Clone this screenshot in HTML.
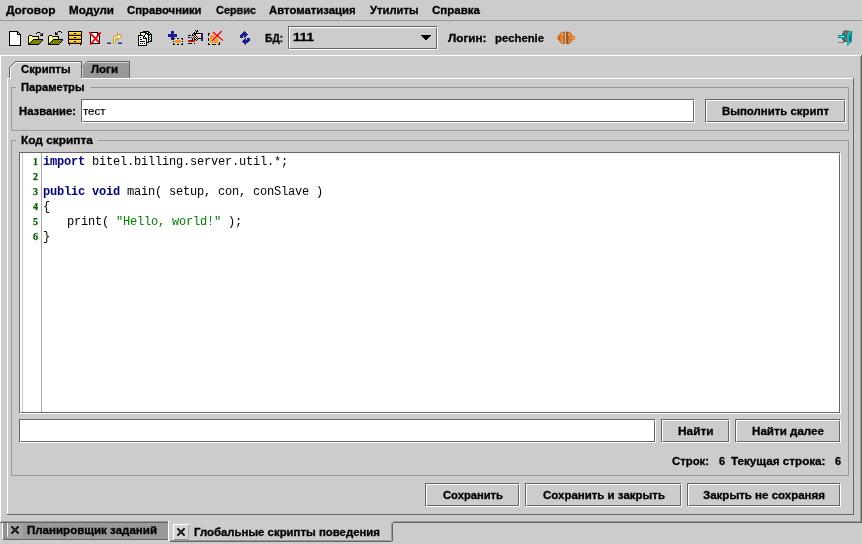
<!DOCTYPE html>
<html><head><meta charset="utf-8"><title>BGBilling</title><style>
html,body{margin:0;padding:0}
body{width:862px;height:544px;background:#cccccc;position:relative;overflow:hidden;font-family:"Liberation Sans",sans-serif}
.r{position:absolute}
.t{position:absolute;white-space:pre;line-height:20px;height:20px;transform-origin:0 0;color:#000;will-change:transform}
.b{font:bold 11px "Liberation Sans",sans-serif;line-height:20px;-webkit-text-stroke:0.3px #000}
.n{font:11px "Liberation Sans",sans-serif;line-height:20px;-webkit-text-stroke:0.2px #000}
.m{font:12px "Liberation Mono",monospace;line-height:20px}
.mb{font:bold 12px "Liberation Mono",monospace;line-height:20px}
.ln{font:bold 10px "Liberation Serif",serif;line-height:20px;-webkit-text-stroke:0.25px #006000}
svg{position:absolute;overflow:visible}
</style></head><body>
<div class="r" style="left:0px;top:20px;width:862px;height:1px;background:#999999"></div>
<div class="t b" style="left:5.5px;top:0px;transform:scaleX(1.0783);">Договор</div>
<div class="t b" style="left:69px;top:0px;transform:scaleX(1.0569);">Модули</div>
<div class="t b" style="left:127px;top:0px;transform:scaleX(1.0267);">Справочники</div>
<div class="t b" style="left:215.5px;top:0px;transform:scaleX(0.9892);">Сервис</div>
<div class="t b" style="left:269px;top:0px;transform:scaleX(1.0294);">Автоматизация</div>
<div class="t b" style="left:370px;top:0px;transform:scaleX(1.0204);">Утилиты</div>
<div class="t b" style="left:432px;top:0px;transform:scaleX(1.0477);">Справка</div>
<div class="t b" style="left:265px;top:28px;transform:scaleX(0.9275);">БД:</div>
<div class="r" style="left:289px;top:49px;width:149px;height:1px;background:#ffffff"></div>
<div class="r" style="left:437px;top:27px;width:1px;height:23px;background:#ffffff"></div>
<div class="r" style="left:289px;top:27px;width:147px;height:1px;background:#ffffff"></div>
<div class="r" style="left:289px;top:27px;width:1px;height:21px;background:#ffffff"></div>
<div class="r" style="left:288px;top:26px;width:149px;height:1px;background:#666666"></div>
<div class="r" style="left:288px;top:48px;width:149px;height:1px;background:#666666"></div>
<div class="r" style="left:288px;top:26px;width:1px;height:23px;background:#666666"></div>
<div class="r" style="left:436px;top:26px;width:1px;height:23px;background:#666666"></div>
<div class="r" style="left:436px;top:27px;width:1px;height:1px;background:#cccccc"></div>
<div class="r" style="left:289px;top:48px;width:1px;height:1px;background:#cccccc"></div>
<div class="r" style="left:437px;top:26px;width:1px;height:1px;background:#cccccc"></div>
<div class="r" style="left:288px;top:49px;width:1px;height:1px;background:#cccccc"></div>
<div class="t b" style="left:293px;top:27px;transform:scaleX(1.2252);">111</div>
<svg style="left:421px;top:35px" width="10" height="5" shape-rendering="crispEdges"><path d="M0 0h10v1h-1v1h-1v1h-1v1h-1v1h-2v-1h-1v-1h-1v-1h-1v-1h-1z" fill="#000"/></svg>
<div class="t b" style="left:448px;top:28px;transform:scaleX(1.0667);">Логин:</div>
<div class="t b" style="left:495px;top:28px;transform:scaleX(1.0275);">pechenie</div>
<svg style="left:9px;top:31px" width="12" height="15" shape-rendering="crispEdges"><rect x="0" y="0" width="9" height="1" fill="#000000"/><rect x="0" y="1" width="1" height="1" fill="#000000"/><rect x="1" y="1" width="7" height="1" fill="#ffffff"/><rect x="8" y="1" width="2" height="1" fill="#000000"/><rect x="0" y="2" width="1" height="1" fill="#000000"/><rect x="1" y="2" width="7" height="1" fill="#ffffff"/><rect x="8" y="2" width="1" height="1" fill="#000000"/><rect x="9" y="2" width="1" height="1" fill="#ffffff"/><rect x="10" y="2" width="1" height="1" fill="#000000"/><rect x="0" y="3" width="1" height="1" fill="#000000"/><rect x="1" y="3" width="7" height="1" fill="#ffffff"/><rect x="8" y="3" width="4" height="1" fill="#000000"/><rect x="0" y="4" width="1" height="1" fill="#000000"/><rect x="1" y="4" width="10" height="1" fill="#ffffff"/><rect x="11" y="4" width="1" height="1" fill="#000000"/><rect x="0" y="5" width="1" height="1" fill="#000000"/><rect x="1" y="5" width="10" height="1" fill="#ffffff"/><rect x="11" y="5" width="1" height="1" fill="#000000"/><rect x="0" y="6" width="1" height="1" fill="#000000"/><rect x="1" y="6" width="10" height="1" fill="#ffffff"/><rect x="11" y="6" width="1" height="1" fill="#000000"/><rect x="0" y="7" width="1" height="1" fill="#000000"/><rect x="1" y="7" width="10" height="1" fill="#ffffff"/><rect x="11" y="7" width="1" height="1" fill="#000000"/><rect x="0" y="8" width="1" height="1" fill="#000000"/><rect x="1" y="8" width="10" height="1" fill="#ffffff"/><rect x="11" y="8" width="1" height="1" fill="#000000"/><rect x="0" y="9" width="1" height="1" fill="#000000"/><rect x="1" y="9" width="10" height="1" fill="#ffffff"/><rect x="11" y="9" width="1" height="1" fill="#000000"/><rect x="0" y="10" width="1" height="1" fill="#000000"/><rect x="1" y="10" width="10" height="1" fill="#ffffff"/><rect x="11" y="10" width="1" height="1" fill="#000000"/><rect x="0" y="11" width="1" height="1" fill="#000000"/><rect x="1" y="11" width="10" height="1" fill="#ffffff"/><rect x="11" y="11" width="1" height="1" fill="#000000"/><rect x="0" y="12" width="1" height="1" fill="#000000"/><rect x="1" y="12" width="10" height="1" fill="#ffffff"/><rect x="11" y="12" width="1" height="1" fill="#000000"/><rect x="0" y="13" width="1" height="1" fill="#000000"/><rect x="1" y="13" width="10" height="1" fill="#ffffff"/><rect x="11" y="13" width="1" height="1" fill="#000000"/><rect x="0" y="14" width="12" height="1" fill="#000000"/></svg>
<svg style="left:28px;top:31px" width="15" height="14" shape-rendering="crispEdges"><rect x="9" y="1" width="3" height="1" fill="#000000"/><rect x="8" y="2" width="1" height="1" fill="#000000"/><rect x="12" y="2" width="1" height="1" fill="#000000"/><rect x="14" y="2" width="1" height="1" fill="#000000"/><rect x="13" y="3" width="2" height="1" fill="#000000"/><rect x="1" y="4" width="3" height="1" fill="#000000"/><rect x="0" y="5" width="1" height="1" fill="#000000"/><rect x="1" y="5" width="1" height="1" fill="#ffff00"/><rect x="2" y="5" width="1" height="1" fill="#ffffff"/><rect x="3" y="5" width="1" height="1" fill="#ffff00"/><rect x="4" y="5" width="7" height="1" fill="#000000"/><rect x="0" y="6" width="1" height="1" fill="#000000"/><rect x="1" y="6" width="1" height="1" fill="#ffffff"/><rect x="2" y="6" width="1" height="1" fill="#ffff00"/><rect x="3" y="6" width="1" height="1" fill="#ffffff"/><rect x="4" y="6" width="1" height="1" fill="#ffff00"/><rect x="5" y="6" width="1" height="1" fill="#ffffff"/><rect x="6" y="6" width="1" height="1" fill="#ffff00"/><rect x="7" y="6" width="1" height="1" fill="#ffffff"/><rect x="8" y="6" width="1" height="1" fill="#ffff00"/><rect x="9" y="6" width="1" height="1" fill="#ffffff"/><rect x="10" y="6" width="1" height="1" fill="#000000"/><rect x="0" y="7" width="1" height="1" fill="#000000"/><rect x="1" y="7" width="1" height="1" fill="#ffff00"/><rect x="2" y="7" width="1" height="1" fill="#ffffff"/><rect x="3" y="7" width="1" height="1" fill="#ffff00"/><rect x="4" y="7" width="1" height="1" fill="#ffffff"/><rect x="5" y="7" width="1" height="1" fill="#ffff00"/><rect x="6" y="7" width="1" height="1" fill="#ffffff"/><rect x="7" y="7" width="1" height="1" fill="#ffff00"/><rect x="8" y="7" width="1" height="1" fill="#ffffff"/><rect x="9" y="7" width="1" height="1" fill="#ffff00"/><rect x="10" y="7" width="1" height="1" fill="#000000"/><rect x="0" y="8" width="1" height="1" fill="#000000"/><rect x="1" y="8" width="1" height="1" fill="#ffffff"/><rect x="2" y="8" width="1" height="1" fill="#ffff00"/><rect x="3" y="8" width="1" height="1" fill="#ffffff"/><rect x="4" y="8" width="1" height="1" fill="#ffff00"/><rect x="5" y="8" width="10" height="1" fill="#000000"/><rect x="0" y="9" width="1" height="1" fill="#000000"/><rect x="1" y="9" width="1" height="1" fill="#ffff00"/><rect x="2" y="9" width="1" height="1" fill="#ffffff"/><rect x="3" y="9" width="1" height="1" fill="#ffff00"/><rect x="4" y="9" width="1" height="1" fill="#000000"/><rect x="5" y="9" width="9" height="1" fill="#808000"/><rect x="14" y="9" width="1" height="1" fill="#000000"/><rect x="0" y="10" width="1" height="1" fill="#000000"/><rect x="1" y="10" width="1" height="1" fill="#ffffff"/><rect x="2" y="10" width="1" height="1" fill="#ffff00"/><rect x="3" y="10" width="1" height="1" fill="#000000"/><rect x="4" y="10" width="9" height="1" fill="#808000"/><rect x="13" y="10" width="1" height="1" fill="#000000"/><rect x="0" y="11" width="1" height="1" fill="#000000"/><rect x="1" y="11" width="1" height="1" fill="#ffff00"/><rect x="2" y="11" width="1" height="1" fill="#000000"/><rect x="3" y="11" width="9" height="1" fill="#808000"/><rect x="12" y="11" width="1" height="1" fill="#000000"/><rect x="0" y="12" width="2" height="1" fill="#000000"/><rect x="2" y="12" width="9" height="1" fill="#808000"/><rect x="11" y="12" width="1" height="1" fill="#000000"/><rect x="0" y="13" width="11" height="1" fill="#000000"/><rect x="12" y="4" width="3" height="1" fill="#000"/></svg>
<svg style="left:48px;top:31px" width="15" height="14" shape-rendering="crispEdges"><rect x="10" y="0" width="3" height="1" fill="#000000"/><rect x="7" y="1" width="1" height="1" fill="#000000"/><rect x="9" y="1" width="1" height="1" fill="#000000"/><rect x="13" y="1" width="1" height="1" fill="#000000"/><rect x="7" y="2" width="2" height="1" fill="#000000"/><rect x="7" y="3" width="3" height="1" fill="#000000"/><rect x="1" y="4" width="3" height="1" fill="#000000"/><rect x="0" y="5" width="1" height="1" fill="#000000"/><rect x="1" y="5" width="1" height="1" fill="#ffff00"/><rect x="2" y="5" width="1" height="1" fill="#ffffff"/><rect x="3" y="5" width="1" height="1" fill="#ffff00"/><rect x="4" y="5" width="7" height="1" fill="#000000"/><rect x="0" y="6" width="1" height="1" fill="#000000"/><rect x="1" y="6" width="1" height="1" fill="#ffffff"/><rect x="2" y="6" width="1" height="1" fill="#ffff00"/><rect x="3" y="6" width="1" height="1" fill="#ffffff"/><rect x="4" y="6" width="1" height="1" fill="#ffff00"/><rect x="5" y="6" width="1" height="1" fill="#ffffff"/><rect x="6" y="6" width="1" height="1" fill="#ffff00"/><rect x="7" y="6" width="1" height="1" fill="#ffffff"/><rect x="8" y="6" width="1" height="1" fill="#ffff00"/><rect x="9" y="6" width="1" height="1" fill="#ffffff"/><rect x="10" y="6" width="1" height="1" fill="#000000"/><rect x="0" y="7" width="1" height="1" fill="#000000"/><rect x="1" y="7" width="1" height="1" fill="#ffff00"/><rect x="2" y="7" width="1" height="1" fill="#ffffff"/><rect x="3" y="7" width="1" height="1" fill="#ffff00"/><rect x="4" y="7" width="1" height="1" fill="#ffffff"/><rect x="5" y="7" width="1" height="1" fill="#ffff00"/><rect x="6" y="7" width="1" height="1" fill="#ffffff"/><rect x="7" y="7" width="1" height="1" fill="#ffff00"/><rect x="8" y="7" width="1" height="1" fill="#ffffff"/><rect x="9" y="7" width="1" height="1" fill="#ffff00"/><rect x="10" y="7" width="1" height="1" fill="#000000"/><rect x="0" y="8" width="1" height="1" fill="#000000"/><rect x="1" y="8" width="1" height="1" fill="#ffffff"/><rect x="2" y="8" width="1" height="1" fill="#ffff00"/><rect x="3" y="8" width="1" height="1" fill="#ffffff"/><rect x="4" y="8" width="1" height="1" fill="#ffff00"/><rect x="5" y="8" width="10" height="1" fill="#000000"/><rect x="0" y="9" width="1" height="1" fill="#000000"/><rect x="1" y="9" width="1" height="1" fill="#ffff00"/><rect x="2" y="9" width="1" height="1" fill="#ffffff"/><rect x="3" y="9" width="1" height="1" fill="#ffff00"/><rect x="4" y="9" width="1" height="1" fill="#000000"/><rect x="5" y="9" width="9" height="1" fill="#808000"/><rect x="14" y="9" width="1" height="1" fill="#000000"/><rect x="0" y="10" width="1" height="1" fill="#000000"/><rect x="1" y="10" width="1" height="1" fill="#ffffff"/><rect x="2" y="10" width="1" height="1" fill="#ffff00"/><rect x="3" y="10" width="1" height="1" fill="#000000"/><rect x="4" y="10" width="9" height="1" fill="#808000"/><rect x="13" y="10" width="1" height="1" fill="#000000"/><rect x="0" y="11" width="1" height="1" fill="#000000"/><rect x="1" y="11" width="1" height="1" fill="#ffff00"/><rect x="2" y="11" width="1" height="1" fill="#000000"/><rect x="3" y="11" width="9" height="1" fill="#808000"/><rect x="12" y="11" width="1" height="1" fill="#000000"/><rect x="0" y="12" width="2" height="1" fill="#000000"/><rect x="2" y="12" width="9" height="1" fill="#808000"/><rect x="11" y="12" width="1" height="1" fill="#000000"/><rect x="0" y="13" width="11" height="1" fill="#000000"/></svg>
<svg style="left:68px;top:31px" width="14" height="15" shape-rendering="crispEdges"><rect x="0" y="0" width="14" height="1" fill="#000000"/><rect x="0" y="1" width="1" height="1" fill="#000000"/><rect x="1" y="1" width="12" height="1" fill="#ffe066"/><rect x="13" y="1" width="1" height="1" fill="#000000"/><rect x="0" y="2" width="1" height="1" fill="#000000"/><rect x="1" y="2" width="5" height="1" fill="#ffc20e"/><rect x="6" y="2" width="2" height="1" fill="#000000"/><rect x="8" y="2" width="5" height="1" fill="#ffc20e"/><rect x="13" y="2" width="1" height="1" fill="#000000"/><rect x="0" y="3" width="1" height="1" fill="#000000"/><rect x="1" y="3" width="12" height="1" fill="#e0a000"/><rect x="13" y="3" width="1" height="1" fill="#000000"/><rect x="0" y="4" width="14" height="1" fill="#000000"/><rect x="0" y="5" width="1" height="1" fill="#000000"/><rect x="1" y="5" width="12" height="1" fill="#ffe066"/><rect x="13" y="5" width="1" height="1" fill="#000000"/><rect x="0" y="6" width="1" height="1" fill="#000000"/><rect x="1" y="6" width="5" height="1" fill="#ffc20e"/><rect x="6" y="6" width="2" height="1" fill="#000000"/><rect x="8" y="6" width="5" height="1" fill="#ffc20e"/><rect x="13" y="6" width="1" height="1" fill="#000000"/><rect x="0" y="7" width="1" height="1" fill="#000000"/><rect x="1" y="7" width="12" height="1" fill="#e0a000"/><rect x="13" y="7" width="1" height="1" fill="#000000"/><rect x="0" y="8" width="14" height="1" fill="#000000"/><rect x="0" y="9" width="1" height="1" fill="#000000"/><rect x="1" y="9" width="12" height="1" fill="#ffe066"/><rect x="13" y="9" width="1" height="1" fill="#000000"/><rect x="0" y="10" width="1" height="1" fill="#000000"/><rect x="1" y="10" width="5" height="1" fill="#ffc20e"/><rect x="6" y="10" width="2" height="1" fill="#000000"/><rect x="8" y="10" width="5" height="1" fill="#ffc20e"/><rect x="13" y="10" width="1" height="1" fill="#000000"/><rect x="0" y="11" width="1" height="1" fill="#000000"/><rect x="1" y="11" width="12" height="1" fill="#e0a000"/><rect x="13" y="11" width="1" height="1" fill="#000000"/><rect x="0" y="12" width="14" height="1" fill="#000000"/><rect x="1" y="13" width="1" height="1" fill="#000000"/><rect x="12" y="13" width="1" height="1" fill="#000000"/><rect x="1" y="14" width="1" height="1" fill="#808080"/><rect x="12" y="14" width="1" height="1" fill="#808080"/></svg>
<svg style="left:88px;top:31px" width="14" height="15" shape-rendering="crispEdges"><rect x="2" y="1" width="8" height="1" fill="#000000"/><rect x="2" y="2" width="1" height="1" fill="#000000"/><rect x="3" y="2" width="6" height="1" fill="#ffffff"/><rect x="9" y="2" width="2" height="1" fill="#000000"/><rect x="2" y="3" width="1" height="1" fill="#000000"/><rect x="3" y="3" width="6" height="1" fill="#ffffff"/><rect x="9" y="3" width="3" height="1" fill="#000000"/><rect x="2" y="4" width="1" height="1" fill="#000000"/><rect x="3" y="4" width="8" height="1" fill="#ffffff"/><rect x="11" y="4" width="1" height="1" fill="#000000"/><rect x="2" y="5" width="1" height="1" fill="#000000"/><rect x="3" y="5" width="8" height="1" fill="#ffffff"/><rect x="11" y="5" width="1" height="1" fill="#000000"/><rect x="2" y="6" width="1" height="1" fill="#000000"/><rect x="3" y="6" width="8" height="1" fill="#ffffff"/><rect x="11" y="6" width="1" height="1" fill="#000000"/><rect x="2" y="7" width="1" height="1" fill="#000000"/><rect x="3" y="7" width="8" height="1" fill="#ffffff"/><rect x="11" y="7" width="1" height="1" fill="#000000"/><rect x="2" y="8" width="1" height="1" fill="#000000"/><rect x="3" y="8" width="8" height="1" fill="#ffffff"/><rect x="11" y="8" width="1" height="1" fill="#000000"/><rect x="2" y="9" width="1" height="1" fill="#000000"/><rect x="3" y="9" width="8" height="1" fill="#ffffff"/><rect x="11" y="9" width="1" height="1" fill="#000000"/><rect x="2" y="10" width="1" height="1" fill="#000000"/><rect x="3" y="10" width="8" height="1" fill="#ffffff"/><rect x="11" y="10" width="1" height="1" fill="#000000"/><rect x="2" y="11" width="1" height="1" fill="#000000"/><rect x="3" y="11" width="8" height="1" fill="#ffffff"/><rect x="11" y="11" width="1" height="1" fill="#000000"/><rect x="2" y="12" width="10" height="1" fill="#000000"/><g shape-rendering="auto" stroke="#ff0000" stroke-width="1.8" stroke-linecap="butt"><path d="M1.2 1.2 L11.2 11.5"/><path d="M12.7 1.3 L2.3 13.7"/></g></svg>
<svg style="left:105px;top:31px" width="20" height="16"><g shape-rendering="crispEdges"><rect x="2" y="11" width="4" height="1" fill="#5b86cc"/><rect x="2" y="12" width="4" height="1" fill="#243c78"/><rect x="13" y="11" width="4" height="1" fill="#5b86cc"/><rect x="13" y="12" width="4" height="1" fill="#243c78"/></g><path d="M8.5 12 V7.2 Q8.5 4.6 11 4.6 H12.6 V2.3 L17 5.6 L12.6 8.9 V7 H11.2 Q10.6 7 10.6 7.8 V12 L9.5 13 Z" fill="#fff2cc" stroke="#cc9210" stroke-width="1" stroke-linejoin="round"/></svg>
<svg style="left:137px;top:30px" width="16" height="16" shape-rendering="crispEdges"><rect x="6" y="1" width="6" height="1" fill="#000000"/><rect x="3" y="2" width="6" height="1" fill="#000000"/><rect x="9" y="2" width="1" height="1" fill="#00a000"/><rect x="10" y="2" width="1" height="1" fill="#ffffff"/><rect x="11" y="2" width="2" height="1" fill="#000000"/><rect x="3" y="3" width="1" height="1" fill="#000000"/><rect x="4" y="3" width="1" height="1" fill="#ffff00"/><rect x="5" y="3" width="3" height="1" fill="#ffffff"/><rect x="8" y="3" width="4" height="1" fill="#000000"/><rect x="12" y="3" width="1" height="1" fill="#ffffff"/><rect x="13" y="3" width="1" height="1" fill="#000000"/><rect x="3" y="4" width="1" height="1" fill="#000000"/><rect x="4" y="4" width="2" height="1" fill="#ffffff"/><rect x="6" y="4" width="1" height="1" fill="#ffff00"/><rect x="7" y="4" width="1" height="1" fill="#ffffff"/><rect x="8" y="4" width="1" height="1" fill="#000000"/><rect x="9" y="4" width="1" height="1" fill="#ffffff"/><rect x="10" y="4" width="5" height="1" fill="#000000"/><rect x="1" y="5" width="5" height="1" fill="#000000"/><rect x="6" y="5" width="1" height="1" fill="#ffffff"/><rect x="7" y="5" width="1" height="1" fill="#000000"/><rect x="8" y="5" width="3" height="1" fill="#ffffff"/><rect x="11" y="5" width="1" height="1" fill="#000000"/><rect x="12" y="5" width="1" height="1" fill="#00a000"/><rect x="13" y="5" width="1" height="1" fill="#ffffff"/><rect x="14" y="5" width="1" height="1" fill="#000000"/><rect x="1" y="6" width="1" height="1" fill="#000000"/><rect x="2" y="6" width="4" height="1" fill="#ffffff"/><rect x="6" y="6" width="2" height="1" fill="#000000"/><rect x="8" y="6" width="3" height="1" fill="#ffffff"/><rect x="11" y="6" width="1" height="1" fill="#000000"/><rect x="12" y="6" width="1" height="1" fill="#ffffff"/><rect x="13" y="6" width="1" height="1" fill="#00a000"/><rect x="14" y="6" width="1" height="1" fill="#000000"/><rect x="1" y="7" width="1" height="1" fill="#000000"/><rect x="2" y="7" width="1" height="1" fill="#ffffff"/><rect x="3" y="7" width="1" height="1" fill="#000000"/><rect x="4" y="7" width="2" height="1" fill="#ffffff"/><rect x="6" y="7" width="1" height="1" fill="#000000"/><rect x="7" y="7" width="1" height="1" fill="#ffffff"/><rect x="8" y="7" width="1" height="1" fill="#000000"/><rect x="9" y="7" width="1" height="1" fill="#ffff00"/><rect x="10" y="7" width="1" height="1" fill="#ffffff"/><rect x="11" y="7" width="1" height="1" fill="#000000"/><rect x="12" y="7" width="1" height="1" fill="#00a000"/><rect x="13" y="7" width="1" height="1" fill="#ffffff"/><rect x="14" y="7" width="1" height="1" fill="#000000"/><rect x="1" y="8" width="1" height="1" fill="#000000"/><rect x="2" y="8" width="4" height="1" fill="#ffffff"/><rect x="6" y="8" width="4" height="1" fill="#000000"/><rect x="10" y="8" width="1" height="1" fill="#ffffff"/><rect x="11" y="8" width="1" height="1" fill="#000000"/><rect x="12" y="8" width="1" height="1" fill="#ffffff"/><rect x="13" y="8" width="1" height="1" fill="#00a000"/><rect x="14" y="8" width="1" height="1" fill="#000000"/><rect x="1" y="9" width="1" height="1" fill="#000000"/><rect x="2" y="9" width="1" height="1" fill="#ffffff"/><rect x="3" y="9" width="2" height="1" fill="#000000"/><rect x="5" y="9" width="4" height="1" fill="#ffffff"/><rect x="9" y="9" width="1" height="1" fill="#000000"/><rect x="10" y="9" width="1" height="1" fill="#ffffff"/><rect x="11" y="9" width="1" height="1" fill="#000000"/><rect x="12" y="9" width="1" height="1" fill="#00a000"/><rect x="13" y="9" width="1" height="1" fill="#ffffff"/><rect x="14" y="9" width="1" height="1" fill="#000000"/><rect x="1" y="10" width="1" height="1" fill="#000000"/><rect x="2" y="10" width="7" height="1" fill="#ffffff"/><rect x="9" y="10" width="1" height="1" fill="#000000"/><rect x="10" y="10" width="1" height="1" fill="#ffffff"/><rect x="11" y="10" width="1" height="1" fill="#000000"/><rect x="12" y="10" width="1" height="1" fill="#ffffff"/><rect x="13" y="10" width="1" height="1" fill="#00a000"/><rect x="14" y="10" width="1" height="1" fill="#000000"/><rect x="1" y="11" width="1" height="1" fill="#000000"/><rect x="2" y="11" width="1" height="1" fill="#ffffff"/><rect x="3" y="11" width="5" height="1" fill="#000000"/><rect x="8" y="11" width="1" height="1" fill="#ffffff"/><rect x="9" y="11" width="1" height="1" fill="#000000"/><rect x="10" y="11" width="1" height="1" fill="#ffffff"/><rect x="11" y="11" width="4" height="1" fill="#000000"/><rect x="1" y="12" width="1" height="1" fill="#000000"/><rect x="2" y="12" width="7" height="1" fill="#ffffff"/><rect x="9" y="12" width="3" height="1" fill="#000000"/><rect x="1" y="13" width="1" height="1" fill="#000000"/><rect x="2" y="13" width="1" height="1" fill="#ffffff"/><rect x="3" y="13" width="1" height="1" fill="#000000"/><rect x="4" y="13" width="1" height="1" fill="#ffffff"/><rect x="5" y="13" width="1" height="1" fill="#000000"/><rect x="6" y="13" width="1" height="1" fill="#ffffff"/><rect x="7" y="13" width="1" height="1" fill="#000000"/><rect x="8" y="13" width="1" height="1" fill="#ffffff"/><rect x="9" y="13" width="1" height="1" fill="#000000"/><rect x="1" y="14" width="1" height="1" fill="#000000"/><rect x="2" y="14" width="7" height="1" fill="#ffffff"/><rect x="9" y="14" width="1" height="1" fill="#000000"/><rect x="1" y="15" width="9" height="1" fill="#000000"/></svg>
<svg style="left:168px;top:31px" width="16" height="14" shape-rendering="crispEdges"><rect x="3" y="0" width="3" height="1" fill="#1c1c8c"/><rect x="3" y="1" width="3" height="1" fill="#1c1c8c"/><rect x="3" y="2" width="3" height="1" fill="#1c1c8c"/><rect x="0" y="3" width="9" height="1" fill="#1c1c8c"/><rect x="0" y="4" width="9" height="1" fill="#1c1c8c"/><rect x="0" y="5" width="9" height="1" fill="#1c1c8c"/><rect x="3" y="6" width="3" height="1" fill="#1c1c8c"/><rect x="3" y="7" width="2" height="1" fill="#1c1c8c"/><rect x="5" y="7" width="2" height="1" fill="#000000"/><rect x="9" y="7" width="2" height="1" fill="#000000"/><rect x="13" y="7" width="2" height="1" fill="#000000"/><rect x="3" y="8" width="3" height="1" fill="#1c1c8c"/><rect x="14" y="8" width="1" height="1" fill="#000000"/><rect x="7" y="9" width="6" height="1" fill="#ff9410"/><rect x="5" y="10" width="1" height="1" fill="#000000"/><rect x="7" y="10" width="6" height="1" fill="#ff9410"/><rect x="14" y="10" width="1" height="1" fill="#000000"/><rect x="7" y="11" width="6" height="1" fill="#ff9410"/><rect x="5" y="12" width="1" height="1" fill="#000000"/><rect x="14" y="12" width="1" height="1" fill="#000000"/><rect x="5" y="13" width="2" height="1" fill="#000000"/><rect x="9" y="13" width="2" height="1" fill="#000000"/><rect x="13" y="13" width="2" height="1" fill="#000000"/></svg>
<svg style="left:187px;top:29px" width="16" height="15" shape-rendering="crispEdges"><rect x="8" y="1" width="1" height="1" fill="#000000"/><rect x="10" y="1" width="1" height="1" fill="#000000"/><rect x="9" y="2" width="2" height="1" fill="#000000"/><rect x="7" y="3" width="1" height="1" fill="#000000"/><rect x="9" y="3" width="1" height="1" fill="#000000"/><rect x="6" y="4" width="8" height="1" fill="#000000"/><rect x="14" y="4" width="2" height="1" fill="#1c1c8c"/><rect x="5" y="5" width="1" height="1" fill="#000000"/><rect x="6" y="5" width="1" height="1" fill="#ffcc88"/><rect x="7" y="5" width="2" height="1" fill="#000000"/><rect x="9" y="5" width="5" height="1" fill="#ffffff"/><rect x="14" y="5" width="2" height="1" fill="#1c1c8c"/><rect x="1" y="6" width="3" height="1" fill="#000000"/><rect x="5" y="6" width="2" height="1" fill="#000000"/><rect x="7" y="6" width="1" height="1" fill="#ffcc88"/><rect x="8" y="6" width="1" height="1" fill="#000000"/><rect x="9" y="6" width="5" height="1" fill="#ffcc88"/><rect x="14" y="6" width="2" height="1" fill="#1c1c8c"/><rect x="6" y="7" width="1" height="1" fill="#ffcc88"/><rect x="7" y="7" width="1" height="1" fill="#000000"/><rect x="8" y="7" width="1" height="1" fill="#ffcc88"/><rect x="9" y="7" width="1" height="1" fill="#000000"/><rect x="10" y="7" width="4" height="1" fill="#ffcc88"/><rect x="14" y="7" width="2" height="1" fill="#1c1c8c"/><rect x="1" y="8" width="2" height="1" fill="#000000"/><rect x="4" y="8" width="1" height="1" fill="#000000"/><rect x="5" y="8" width="1" height="1" fill="#ffcc88"/><rect x="6" y="8" width="1" height="1" fill="#000000"/><rect x="7" y="8" width="1" height="1" fill="#ffcc88"/><rect x="8" y="8" width="1" height="1" fill="#000000"/><rect x="9" y="8" width="1" height="1" fill="#ffcc88"/><rect x="10" y="8" width="1" height="1" fill="#000000"/><rect x="11" y="8" width="3" height="1" fill="#ffcc88"/><rect x="14" y="8" width="2" height="1" fill="#1c1c8c"/><rect x="5" y="9" width="1" height="1" fill="#000000"/><rect x="6" y="9" width="1" height="1" fill="#ffcc88"/><rect x="7" y="9" width="1" height="1" fill="#000000"/><rect x="8" y="9" width="1" height="1" fill="#ffcc88"/><rect x="9" y="9" width="1" height="1" fill="#000000"/><rect x="10" y="9" width="1" height="1" fill="#ffcc88"/><rect x="11" y="9" width="3" height="1" fill="#000000"/><rect x="14" y="9" width="2" height="1" fill="#1c1c8c"/><rect x="5" y="10" width="1" height="1" fill="#000000"/><rect x="7" y="10" width="2" height="1" fill="#000000"/><rect x="9" y="10" width="1" height="1" fill="#ffcc88"/><rect x="10" y="10" width="1" height="1" fill="#000000"/><rect x="14" y="10" width="2" height="1" fill="#1c1c8c"/><rect x="1" y="11" width="3" height="1" fill="#ff0000"/><rect x="4" y="11" width="2" height="1" fill="#000000"/><rect x="6" y="11" width="2" height="1" fill="#ff0000"/><rect x="9" y="11" width="1" height="1" fill="#000000"/><rect x="14" y="11" width="2" height="1" fill="#1c1c8c"/><rect x="1" y="12" width="3" height="1" fill="#ff0000"/><rect x="4" y="12" width="1" height="1" fill="#000000"/><rect x="5" y="12" width="3" height="1" fill="#ff0000"/><rect x="1" y="14" width="4" height="1" fill="#000000"/><rect x="7" y="14" width="1" height="1" fill="#000000"/></svg>
<svg style="left:206px;top:30px" width="16" height="15" shape-rendering="crispEdges"><rect x="2" y="3" width="2" height="1" fill="#000000"/><rect x="2" y="4" width="1" height="1" fill="#000000"/><rect x="2" y="5" width="1" height="1" fill="#000000"/><rect x="4" y="5" width="8" height="1" fill="#ff9410"/><rect x="4" y="6" width="8" height="1" fill="#ff9410"/><rect x="4" y="7" width="8" height="1" fill="#ff9410"/><rect x="2" y="8" width="1" height="1" fill="#000000"/><rect x="4" y="8" width="8" height="1" fill="#ff9410"/><rect x="2" y="9" width="1" height="1" fill="#000000"/><rect x="4" y="9" width="8" height="1" fill="#ff9410"/><rect x="2" y="10" width="1" height="1" fill="#000000"/><rect x="4" y="10" width="8" height="1" fill="#ff9410"/><rect x="4" y="11" width="8" height="1" fill="#ff9410"/><rect x="4" y="12" width="8" height="1" fill="#ff9410"/><rect x="13" y="12" width="1" height="1" fill="#000000"/><rect x="2" y="13" width="1" height="1" fill="#000000"/><rect x="13" y="13" width="1" height="1" fill="#000000"/><rect x="2" y="14" width="2" height="1" fill="#000000"/><rect x="6" y="14" width="4" height="1" fill="#000000"/><rect x="12" y="14" width="2" height="1" fill="#000000"/><g shape-rendering="auto" stroke-linecap="round" fill="none"><path d="M7.3 2.4 L16.6 10.3 M15.4 1.4 L6.4 10.5" stroke="#d2e6e6" stroke-width="3"/><path d="M7.3 2.4 L16.6 10.3 M15.4 1.4 L6.4 10.5" stroke="#ff0000" stroke-width="1.5"/></g></svg>
<svg style="left:237px;top:30px" width="16" height="15" shape-rendering="crispEdges"><rect x="7" y="1" width="1" height="1" fill="#1c1c8c"/><rect x="6" y="2" width="3" height="1" fill="#1c1c8c"/><rect x="5" y="3" width="5" height="1" fill="#1c1c8c"/><rect x="4" y="4" width="7" height="1" fill="#1c1c8c"/><rect x="3" y="5" width="7" height="1" fill="#1c1c8c"/><rect x="3" y="6" width="3" height="1" fill="#1c1c8c"/><rect x="7" y="6" width="2" height="1" fill="#1c1c8c"/><rect x="3" y="7" width="3" height="1" fill="#1c1c8c"/><rect x="7" y="7" width="1" height="1" fill="#1c1c8c"/><rect x="8" y="8" width="1" height="1" fill="#1c1c8c"/><rect x="10" y="8" width="3" height="1" fill="#1c1c8c"/><rect x="7" y="9" width="2" height="1" fill="#1c1c8c"/><rect x="10" y="9" width="3" height="1" fill="#1c1c8c"/><rect x="6" y="10" width="7" height="1" fill="#1c1c8c"/><rect x="5" y="11" width="7" height="1" fill="#1c1c8c"/><rect x="6" y="12" width="5" height="1" fill="#1c1c8c"/><rect x="7" y="13" width="2" height="1" fill="#1c1c8c"/><rect x="8" y="14" width="1" height="1" fill="#1c1c8c"/></svg>
<svg style="left:556px;top:31px" width="21" height="14"><defs><linearGradient id="pg1" x1="0" y1="0" x2="1" y2="0"><stop offset="0" stop-color="#b85a10"/><stop offset="0.45" stop-color="#f08c3c"/><stop offset="1" stop-color="#c86414"/></linearGradient><linearGradient id="pg2" x1="0" y1="0" x2="1" y2="0"><stop offset="0" stop-color="#7a3404"/><stop offset="0.35" stop-color="#c8641c"/><stop offset="0.7" stop-color="#f09040"/><stop offset="1" stop-color="#c86414"/></linearGradient></defs><rect x="1" y="5" width="3" height="3.6" fill="#d8701c"/><rect x="1" y="6" width="3" height="1.4" fill="#f4a860"/><path d="M8.5 0.9 H7.4 C4.6 0.9 3 3.6 3 6.8 C3 10 4.6 12.7 7.4 12.7 H8.5 Z" fill="url(#pg1)" stroke="#a8500c" stroke-width="0.6"/><path d="M10.3 0.9 H11.8 C14.8 0.9 16.2 3.6 16.2 6.8 C16.2 10 14.8 12.7 11.8 12.7 H10.3 Z" fill="url(#pg2)" stroke="#a8500c" stroke-width="0.6"/><rect x="16" y="5" width="3.2" height="3.6" fill="#d8701c"/><rect x="16" y="6" width="3.2" height="1.4" fill="#f4a860"/><ellipse cx="6.4" cy="3.2" rx="1" ry="0.9" fill="#ffd0a0" opacity="0.8"/><ellipse cx="6.4" cy="10.6" rx="0.9" ry="0.7" fill="#ffc080" opacity="0.7"/><ellipse cx="12.6" cy="10.6" rx="0.8" ry="0.7" fill="#ffc080" opacity="0.6"/><ellipse cx="12.6" cy="3.4" rx="0.9" ry="0.8" fill="#ffd0a0" opacity="0.7"/></svg>
<svg style="left:837px;top:30px" width="16" height="16" shape-rendering="crispEdges"><rect x="7" y="0" width="5" height="1" fill="#909090"/><rect x="6" y="1" width="6" height="1" fill="#606060"/><rect x="12" y="1" width="2" height="1" fill="#20b4b4"/><rect x="14" y="1" width="1" height="1" fill="#107878"/><rect x="6" y="2" width="2" height="1" fill="#606060"/><rect x="8" y="2" width="1" height="1" fill="#909090"/><rect x="9" y="2" width="2" height="1" fill="#606060"/><rect x="11" y="2" width="3" height="1" fill="#20b4b4"/><rect x="14" y="2" width="1" height="1" fill="#107878"/><rect x="5" y="3" width="1" height="1" fill="#107878"/><rect x="6" y="3" width="2" height="1" fill="#606060"/><rect x="8" y="3" width="1" height="1" fill="#909090"/><rect x="9" y="3" width="1" height="1" fill="#606060"/><rect x="10" y="3" width="4" height="1" fill="#20b4b4"/><rect x="14" y="3" width="1" height="1" fill="#107878"/><rect x="5" y="4" width="2" height="1" fill="#107878"/><rect x="7" y="4" width="3" height="1" fill="#606060"/><rect x="10" y="4" width="4" height="1" fill="#20b4b4"/><rect x="14" y="4" width="1" height="1" fill="#107878"/><rect x="1" y="5" width="4" height="1" fill="#107878"/><rect x="5" y="5" width="2" height="1" fill="#20b4b4"/><rect x="7" y="5" width="1" height="1" fill="#107878"/><rect x="8" y="5" width="2" height="1" fill="#606060"/><rect x="10" y="5" width="2" height="1" fill="#20b4b4"/><rect x="12" y="5" width="3" height="1" fill="#107878"/><rect x="1" y="6" width="1" height="1" fill="#20b4b4"/><rect x="2" y="6" width="5" height="1" fill="#60f0f0"/><rect x="7" y="6" width="1" height="1" fill="#20b4b4"/><rect x="8" y="6" width="1" height="1" fill="#107878"/><rect x="9" y="6" width="1" height="1" fill="#606060"/><rect x="10" y="6" width="2" height="1" fill="#20b4b4"/><rect x="12" y="6" width="2" height="1" fill="#107878"/><rect x="14" y="6" width="1" height="1" fill="#20b4b4"/><rect x="1" y="7" width="4" height="1" fill="#107878"/><rect x="5" y="7" width="2" height="1" fill="#20b4b4"/><rect x="7" y="7" width="1" height="1" fill="#107878"/><rect x="8" y="7" width="2" height="1" fill="#606060"/><rect x="10" y="7" width="2" height="1" fill="#20b4b4"/><rect x="12" y="7" width="3" height="1" fill="#107878"/><rect x="5" y="8" width="2" height="1" fill="#107878"/><rect x="7" y="8" width="1" height="1" fill="#606060"/><rect x="8" y="8" width="1" height="1" fill="#909090"/><rect x="9" y="8" width="1" height="1" fill="#606060"/><rect x="10" y="8" width="2" height="1" fill="#20b4b4"/><rect x="12" y="8" width="2" height="1" fill="#107878"/><rect x="14" y="8" width="1" height="1" fill="#20b4b4"/><rect x="5" y="9" width="1" height="1" fill="#107878"/><rect x="6" y="9" width="2" height="1" fill="#606060"/><rect x="8" y="9" width="1" height="1" fill="#909090"/><rect x="9" y="9" width="1" height="1" fill="#606060"/><rect x="10" y="9" width="2" height="1" fill="#20b4b4"/><rect x="12" y="9" width="3" height="1" fill="#107878"/><rect x="6" y="10" width="4" height="1" fill="#606060"/><rect x="10" y="10" width="2" height="1" fill="#20b4b4"/><rect x="12" y="10" width="2" height="1" fill="#107878"/><rect x="14" y="10" width="1" height="1" fill="#20b4b4"/><rect x="6" y="11" width="4" height="1" fill="#606060"/><rect x="10" y="11" width="4" height="1" fill="#20b4b4"/><rect x="14" y="11" width="1" height="1" fill="#107878"/><rect x="1" y="12" width="6" height="1" fill="#808080"/><rect x="10" y="12" width="3" height="1" fill="#20b4b4"/><rect x="13" y="12" width="1" height="1" fill="#107878"/><rect x="10" y="13" width="3" height="1" fill="#20b4b4"/><rect x="10" y="14" width="2" height="1" fill="#20b4b4"/><rect x="10" y="15" width="1" height="1" fill="#20b4b4"/></svg>
<div class="r" style="left:0px;top:55px;width:861px;height:1px;background:#ffffff"></div>
<div class="r" style="left:0px;top:55px;width:1px;height:467px;background:#ffffff"></div>
<div class="r" style="left:860px;top:56px;width:1px;height:466px;background:#999999"></div>
<div class="r" style="left:1px;top:521px;width:860px;height:1px;background:#999999"></div>
<div class="r" style="left:861px;top:55px;width:1px;height:468px;background:#666666"></div>
<div class="r" style="left:0px;top:522px;width:862px;height:1px;background:#666666"></div>
<div class="r" style="left:88px;top:62px;width:41px;height:1px;background:#999999"></div>
<div class="r" style="left:87px;top:63px;width:42px;height:1px;background:#999999"></div>
<div class="r" style="left:86px;top:64px;width:43px;height:1px;background:#999999"></div>
<div class="r" style="left:85px;top:65px;width:44px;height:1px;background:#999999"></div>
<div class="r" style="left:84px;top:66px;width:45px;height:1px;background:#999999"></div>
<div class="r" style="left:83px;top:67px;width:46px;height:11px;background:#999999"></div>
<div class="r" style="left:88px;top:62px;width:41px;height:1px;background:#d0d0d0"></div>
<div class="r" style="left:87px;top:62px;width:1px;height:1px;background:#cccccc"></div>
<div class="r" style="left:86px;top:63px;width:1px;height:1px;background:#cccccc"></div>
<div class="r" style="left:85px;top:64px;width:1px;height:1px;background:#cccccc"></div>
<div class="r" style="left:84px;top:65px;width:1px;height:1px;background:#cccccc"></div>
<div class="r" style="left:83px;top:66px;width:1px;height:1px;background:#cccccc"></div>
<div class="r" style="left:82px;top:67px;width:1px;height:11px;background:#cccccc"></div>
<div class="r" style="left:87px;top:61px;width:43px;height:1px;background:#666666"></div>
<div class="r" style="left:129px;top:61px;width:1px;height:17px;background:#666666"></div>
<div class="r" style="left:87px;top:61px;width:1px;height:1px;background:#666666"></div>
<div class="r" style="left:86px;top:62px;width:1px;height:1px;background:#666666"></div>
<div class="r" style="left:85px;top:63px;width:1px;height:1px;background:#666666"></div>
<div class="r" style="left:84px;top:64px;width:1px;height:1px;background:#666666"></div>
<div class="r" style="left:83px;top:65px;width:1px;height:1px;background:#666666"></div>
<div class="r" style="left:82px;top:66px;width:1px;height:1px;background:#666666"></div>
<div class="r" style="left:15px;top:61px;width:67px;height:1px;background:#666666"></div>
<div class="r" style="left:81px;top:61px;width:1px;height:17px;background:#666666"></div>
<div class="r" style="left:9px;top:67px;width:1px;height:11px;background:#666666"></div>
<div class="r" style="left:15px;top:61px;width:1px;height:1px;background:#666666"></div>
<div class="r" style="left:14px;top:62px;width:1px;height:1px;background:#666666"></div>
<div class="r" style="left:13px;top:63px;width:1px;height:1px;background:#666666"></div>
<div class="r" style="left:12px;top:64px;width:1px;height:1px;background:#666666"></div>
<div class="r" style="left:11px;top:65px;width:1px;height:1px;background:#666666"></div>
<div class="r" style="left:10px;top:66px;width:1px;height:1px;background:#666666"></div>
<div class="r" style="left:16px;top:62px;width:65px;height:1px;background:#ffffff"></div>
<div class="r" style="left:10px;top:68px;width:1px;height:11px;background:#ffffff"></div>
<div class="r" style="left:16px;top:62px;width:1px;height:1px;background:#ffffff"></div>
<div class="r" style="left:15px;top:63px;width:1px;height:1px;background:#ffffff"></div>
<div class="r" style="left:14px;top:64px;width:1px;height:1px;background:#ffffff"></div>
<div class="r" style="left:13px;top:65px;width:1px;height:1px;background:#ffffff"></div>
<div class="r" style="left:12px;top:66px;width:1px;height:1px;background:#ffffff"></div>
<div class="r" style="left:11px;top:67px;width:1px;height:1px;background:#ffffff"></div>
<div class="t b" style="left:21px;top:59px;transform:scaleX(1.0236);">Скрипты</div>
<div class="t b" style="left:91px;top:59px;transform:scaleX(1.0473);">Логи</div>
<div class="r" style="left:7px;top:78px;width:1px;height:436px;background:#ffffff"></div>
<div class="r" style="left:7px;top:78px;width:4px;height:1px;background:#ffffff"></div>
<div class="r" style="left:81px;top:78px;width:772px;height:1px;background:#ffffff"></div>
<div class="r" style="left:853px;top:78px;width:1px;height:437px;background:#666666"></div>
<div class="r" style="left:7px;top:514px;width:847px;height:1px;background:#666666"></div>
<div class="r" style="left:11px;top:87px;width:838px;height:1px;background:#999999"></div>
<div class="r" style="left:11px;top:130px;width:838px;height:1px;background:#999999"></div>
<div class="r" style="left:11px;top:87px;width:1px;height:44px;background:#999999"></div>
<div class="r" style="left:848px;top:87px;width:1px;height:44px;background:#999999"></div>
<div class="r" style="left:16px;top:87px;width:74px;height:1px;background:#cccccc"></div>
<div class="t b" style="left:21px;top:77px;transform:scaleX(1.0163);">Параметры</div>
<div class="t b" style="left:19px;top:101px;transform:scaleX(1.0253);">Название:</div>
<div class="r" style="left:81px;top:99px;width:614px;height:24px;background:#ffffff"></div>
<div class="r" style="left:81px;top:99px;width:613px;height:1px;background:#666666"></div>
<div class="r" style="left:81px;top:121px;width:613px;height:1px;background:#666666"></div>
<div class="r" style="left:81px;top:99px;width:1px;height:23px;background:#666666"></div>
<div class="r" style="left:693px;top:99px;width:1px;height:23px;background:#666666"></div>
<div class="r" style="left:81px;top:122px;width:1px;height:1px;background:#cccccc"></div>
<div class="r" style="left:694px;top:99px;width:1px;height:1px;background:#cccccc"></div>
<div class="r" style="left:693px;top:100px;width:1px;height:1px;background:#cccccc"></div>
<div class="r" style="left:82px;top:121px;width:1px;height:1px;background:#cccccc"></div>
<div class="t n" style="left:82.5px;top:101px;transform:scaleX(1.0427);">тест</div>
<div class="r" style="left:706px;top:122px;width:140px;height:1px;background:#ffffff"></div>
<div class="r" style="left:845px;top:100px;width:1px;height:23px;background:#ffffff"></div>
<div class="r" style="left:706px;top:100px;width:138px;height:1px;background:#ffffff"></div>
<div class="r" style="left:706px;top:100px;width:1px;height:21px;background:#ffffff"></div>
<div class="r" style="left:705px;top:99px;width:140px;height:1px;background:#666666"></div>
<div class="r" style="left:705px;top:121px;width:140px;height:1px;background:#666666"></div>
<div class="r" style="left:705px;top:99px;width:1px;height:23px;background:#666666"></div>
<div class="r" style="left:844px;top:99px;width:1px;height:23px;background:#666666"></div>
<div class="r" style="left:844px;top:100px;width:1px;height:1px;background:#cccccc"></div>
<div class="r" style="left:706px;top:121px;width:1px;height:1px;background:#cccccc"></div>
<div class="r" style="left:845px;top:99px;width:1px;height:1px;background:#cccccc"></div>
<div class="r" style="left:705px;top:122px;width:1px;height:1px;background:#cccccc"></div>
<div class="t b" style="left:722px;top:101px;transform:scaleX(1.0371);">Выполнить скрипт</div>
<div class="r" style="left:11px;top:140px;width:838px;height:1px;background:#999999"></div>
<div class="r" style="left:11px;top:475px;width:838px;height:1px;background:#999999"></div>
<div class="r" style="left:11px;top:140px;width:1px;height:336px;background:#999999"></div>
<div class="r" style="left:848px;top:140px;width:1px;height:336px;background:#999999"></div>
<div class="r" style="left:16px;top:140px;width:82px;height:1px;background:#cccccc"></div>
<div class="t b" style="left:21px;top:130px;transform:scaleX(1.0812);">Код скрипта</div>
<div class="r" style="left:19px;top:152px;width:822px;height:262px;background:#ffffff"></div>
<div class="r" style="left:19px;top:152px;width:821px;height:1px;background:#666666"></div>
<div class="r" style="left:19px;top:412px;width:821px;height:1px;background:#666666"></div>
<div class="r" style="left:19px;top:152px;width:1px;height:261px;background:#666666"></div>
<div class="r" style="left:839px;top:152px;width:1px;height:261px;background:#666666"></div>
<div class="r" style="left:19px;top:413px;width:1px;height:1px;background:#cccccc"></div>
<div class="r" style="left:840px;top:152px;width:1px;height:1px;background:#cccccc"></div>
<div class="r" style="left:839px;top:153px;width:1px;height:1px;background:#cccccc"></div>
<div class="r" style="left:20px;top:412px;width:1px;height:1px;background:#cccccc"></div>
<div class="r" style="left:839px;top:153px;width:1px;height:1px;background:#666666"></div>
<div class="r" style="left:839px;top:154px;width:1px;height:1px;background:#cccccc"></div>
<div class="r" style="left:22px;top:153px;width:1px;height:259px;background:#c8c8c8"></div>
<div class="r" style="left:41px;top:153px;width:1px;height:259px;background:#a8a8a8"></div>
<div class="t mb" style="left:43px;top:152px;color:#000080;letter-spacing:-0.2px;">import</div>
<div class="t m" style="left:85px;top:152px;letter-spacing:-0.2px;"> bitel.billing.server.util.*;</div>
<div class="t ln" style="left:33px;top:152px;color:#006000;">1</div>
<div class="t ln" style="left:33px;top:167px;color:#006000;">2</div>
<div class="t mb" style="left:43px;top:182px;color:#000080;letter-spacing:-0.2px;">public</div>
<div class="t m" style="left:85px;top:182px;letter-spacing:-0.2px;"> </div>
<div class="t mb" style="left:92px;top:182px;color:#000080;letter-spacing:-0.2px;">void</div>
<div class="t m" style="left:120px;top:182px;letter-spacing:-0.2px;"> main( setup, con, conSlave )</div>
<div class="t ln" style="left:33px;top:182px;color:#006000;">3</div>
<div class="t m" style="left:43px;top:197px;letter-spacing:-0.2px;">{</div>
<div class="t ln" style="left:33px;top:197px;color:#006000;">4</div>
<div class="t m" style="left:67px;top:212px;letter-spacing:-0.2px;">print( </div>
<div class="t m" style="left:116px;top:212px;color:#008000;letter-spacing:-0.2px;">"Hello, world!"</div>
<div class="t m" style="left:221px;top:212px;letter-spacing:-0.2px;"> );</div>
<div class="t ln" style="left:33px;top:212px;color:#006000;">5</div>
<div class="t m" style="left:43px;top:227px;letter-spacing:-0.2px;">}</div>
<div class="t ln" style="left:33px;top:227px;color:#006000;">6</div>
<div class="r" style="left:19px;top:419px;width:637px;height:24px;background:#ffffff"></div>
<div class="r" style="left:19px;top:419px;width:636px;height:1px;background:#666666"></div>
<div class="r" style="left:19px;top:441px;width:636px;height:1px;background:#666666"></div>
<div class="r" style="left:19px;top:419px;width:1px;height:23px;background:#666666"></div>
<div class="r" style="left:654px;top:419px;width:1px;height:23px;background:#666666"></div>
<div class="r" style="left:19px;top:442px;width:1px;height:1px;background:#cccccc"></div>
<div class="r" style="left:655px;top:419px;width:1px;height:1px;background:#cccccc"></div>
<div class="r" style="left:654px;top:420px;width:1px;height:1px;background:#cccccc"></div>
<div class="r" style="left:20px;top:441px;width:1px;height:1px;background:#cccccc"></div>
<div class="r" style="left:662px;top:442px;width:68px;height:1px;background:#ffffff"></div>
<div class="r" style="left:729px;top:420px;width:1px;height:23px;background:#ffffff"></div>
<div class="r" style="left:662px;top:420px;width:66px;height:1px;background:#ffffff"></div>
<div class="r" style="left:662px;top:420px;width:1px;height:21px;background:#ffffff"></div>
<div class="r" style="left:661px;top:419px;width:68px;height:1px;background:#666666"></div>
<div class="r" style="left:661px;top:441px;width:68px;height:1px;background:#666666"></div>
<div class="r" style="left:661px;top:419px;width:1px;height:23px;background:#666666"></div>
<div class="r" style="left:728px;top:419px;width:1px;height:23px;background:#666666"></div>
<div class="r" style="left:728px;top:420px;width:1px;height:1px;background:#cccccc"></div>
<div class="r" style="left:662px;top:441px;width:1px;height:1px;background:#cccccc"></div>
<div class="r" style="left:729px;top:419px;width:1px;height:1px;background:#cccccc"></div>
<div class="r" style="left:661px;top:442px;width:1px;height:1px;background:#cccccc"></div>
<div class="t b" style="left:678px;top:421px;transform:scaleX(1.0763);">Найти</div>
<div class="r" style="left:736px;top:442px;width:105px;height:1px;background:#ffffff"></div>
<div class="r" style="left:840px;top:420px;width:1px;height:23px;background:#ffffff"></div>
<div class="r" style="left:736px;top:420px;width:103px;height:1px;background:#ffffff"></div>
<div class="r" style="left:736px;top:420px;width:1px;height:21px;background:#ffffff"></div>
<div class="r" style="left:735px;top:419px;width:105px;height:1px;background:#666666"></div>
<div class="r" style="left:735px;top:441px;width:105px;height:1px;background:#666666"></div>
<div class="r" style="left:735px;top:419px;width:1px;height:23px;background:#666666"></div>
<div class="r" style="left:839px;top:419px;width:1px;height:23px;background:#666666"></div>
<div class="r" style="left:839px;top:420px;width:1px;height:1px;background:#cccccc"></div>
<div class="r" style="left:736px;top:441px;width:1px;height:1px;background:#cccccc"></div>
<div class="r" style="left:840px;top:419px;width:1px;height:1px;background:#cccccc"></div>
<div class="r" style="left:735px;top:442px;width:1px;height:1px;background:#cccccc"></div>
<div class="t b" style="left:752px;top:421px;transform:scaleX(1.0554);">Найти далее</div>
<div class="t b" style="left:672px;top:451px;transform:scaleX(1.0291);">Строк:</div>
<div class="t b" style="left:719px;top:451px;transform:scaleX(0.9796);">6</div>
<div class="t b" style="left:731px;top:451px;transform:scaleX(1.0599);">Текущая строка:</div>
<div class="t b" style="left:834.5px;top:451px;transform:scaleX(0.9796);">6</div>
<div class="r" style="left:426px;top:506px;width:94px;height:1px;background:#ffffff"></div>
<div class="r" style="left:519px;top:484px;width:1px;height:23px;background:#ffffff"></div>
<div class="r" style="left:426px;top:484px;width:92px;height:1px;background:#ffffff"></div>
<div class="r" style="left:426px;top:484px;width:1px;height:21px;background:#ffffff"></div>
<div class="r" style="left:425px;top:483px;width:94px;height:1px;background:#666666"></div>
<div class="r" style="left:425px;top:505px;width:94px;height:1px;background:#666666"></div>
<div class="r" style="left:425px;top:483px;width:1px;height:23px;background:#666666"></div>
<div class="r" style="left:518px;top:483px;width:1px;height:23px;background:#666666"></div>
<div class="r" style="left:518px;top:484px;width:1px;height:1px;background:#cccccc"></div>
<div class="r" style="left:426px;top:505px;width:1px;height:1px;background:#cccccc"></div>
<div class="r" style="left:519px;top:483px;width:1px;height:1px;background:#cccccc"></div>
<div class="r" style="left:425px;top:506px;width:1px;height:1px;background:#cccccc"></div>
<div class="t b" style="left:443px;top:485px;transform:scaleX(1.0186);">Сохранить</div>
<div class="r" style="left:526px;top:506px;width:156px;height:1px;background:#ffffff"></div>
<div class="r" style="left:681px;top:484px;width:1px;height:23px;background:#ffffff"></div>
<div class="r" style="left:526px;top:484px;width:154px;height:1px;background:#ffffff"></div>
<div class="r" style="left:526px;top:484px;width:1px;height:21px;background:#ffffff"></div>
<div class="r" style="left:525px;top:483px;width:156px;height:1px;background:#666666"></div>
<div class="r" style="left:525px;top:505px;width:156px;height:1px;background:#666666"></div>
<div class="r" style="left:525px;top:483px;width:1px;height:23px;background:#666666"></div>
<div class="r" style="left:680px;top:483px;width:1px;height:23px;background:#666666"></div>
<div class="r" style="left:680px;top:484px;width:1px;height:1px;background:#cccccc"></div>
<div class="r" style="left:526px;top:505px;width:1px;height:1px;background:#cccccc"></div>
<div class="r" style="left:681px;top:483px;width:1px;height:1px;background:#cccccc"></div>
<div class="r" style="left:525px;top:506px;width:1px;height:1px;background:#cccccc"></div>
<div class="t b" style="left:542.5px;top:485px;transform:scaleX(1.0429);">Сохранить и закрыть</div>
<div class="r" style="left:688px;top:506px;width:153px;height:1px;background:#ffffff"></div>
<div class="r" style="left:840px;top:484px;width:1px;height:23px;background:#ffffff"></div>
<div class="r" style="left:688px;top:484px;width:151px;height:1px;background:#ffffff"></div>
<div class="r" style="left:688px;top:484px;width:1px;height:21px;background:#ffffff"></div>
<div class="r" style="left:687px;top:483px;width:153px;height:1px;background:#666666"></div>
<div class="r" style="left:687px;top:505px;width:153px;height:1px;background:#666666"></div>
<div class="r" style="left:687px;top:483px;width:1px;height:23px;background:#666666"></div>
<div class="r" style="left:839px;top:483px;width:1px;height:23px;background:#666666"></div>
<div class="r" style="left:839px;top:484px;width:1px;height:1px;background:#cccccc"></div>
<div class="r" style="left:688px;top:505px;width:1px;height:1px;background:#cccccc"></div>
<div class="r" style="left:840px;top:483px;width:1px;height:1px;background:#cccccc"></div>
<div class="r" style="left:687px;top:506px;width:1px;height:1px;background:#cccccc"></div>
<div class="t b" style="left:703px;top:485px;transform:scaleX(1.0458);">Закрыть не сохраняя</div>
<div class="r" style="left:3px;top:523px;width:165px;height:16px;background:#999999"></div>
<div class="r" style="left:3px;top:523px;width:4px;height:16px;background:#929292"></div>
<div class="r" style="left:2px;top:523px;width:1px;height:16px;background:#ffffff"></div>
<div class="r" style="left:7px;top:523px;width:1px;height:14px;background:#f0f0f0"></div>
<div class="r" style="left:3px;top:539px;width:165px;height:1px;background:#666666"></div>
<div class="r" style="left:8px;top:523px;width:15px;height:15px;background:#a4a4a0"></div>
<div class="t b" style="left:27px;top:520px;transform:scaleX(1.0489);">Планировщик заданий</div>
<div class="r" style="left:168px;top:521px;width:225px;height:2px;background:#cccccc"></div>
<div class="r" style="left:168px;top:521px;width:1px;height:20px;background:#ffffff"></div>
<div class="r" style="left:391px;top:523px;width:1px;height:17px;background:#999999"></div>
<div class="r" style="left:392px;top:523px;width:1px;height:18px;background:#666666"></div>
<div class="r" style="left:170px;top:540px;width:221px;height:1px;background:#999999"></div>
<div class="r" style="left:170px;top:541px;width:222px;height:1px;background:#666666"></div>
<div class="r" style="left:169px;top:540px;width:1px;height:1px;background:#ffffff"></div>
<div class="r" style="left:173px;top:524px;width:16px;height:16px;background:#d6d4d0"></div>
<div class="r" style="left:173px;top:524px;width:16px;height:1px;background:#ffffff"></div>
<div class="r" style="left:173px;top:524px;width:1px;height:16px;background:#ffffff"></div>
<div class="r" style="left:174px;top:539px;width:15px;height:1px;background:#8c8c88"></div>
<div class="r" style="left:188px;top:525px;width:1px;height:15px;background:#a4a49c"></div>
<div class="t b" style="left:194px;top:522px;transform:scaleX(1.0349);">Глобальные скрипты поведения</div>
<svg style="left:11px;top:526px" width="8" height="8"><path d="M1.1 1.1L6.9 6.9M6.9 1.1L1.1 6.9" stroke="#050505" stroke-width="1.9" stroke-linecap="square" fill="none"/><rect x="2.2" y="2.2" width="3.6" height="3.6" fill="#2a2a2a"/></svg>
<svg style="left:177px;top:528px" width="8" height="8"><path d="M1.1 1.1L6.9 6.9M6.9 1.1L1.1 6.9" stroke="#000" stroke-width="1.9" stroke-linecap="square" fill="none"/><rect x="2.2" y="2.2" width="3.6" height="3.6" fill="#2a2a2a"/></svg>
</body></html>
